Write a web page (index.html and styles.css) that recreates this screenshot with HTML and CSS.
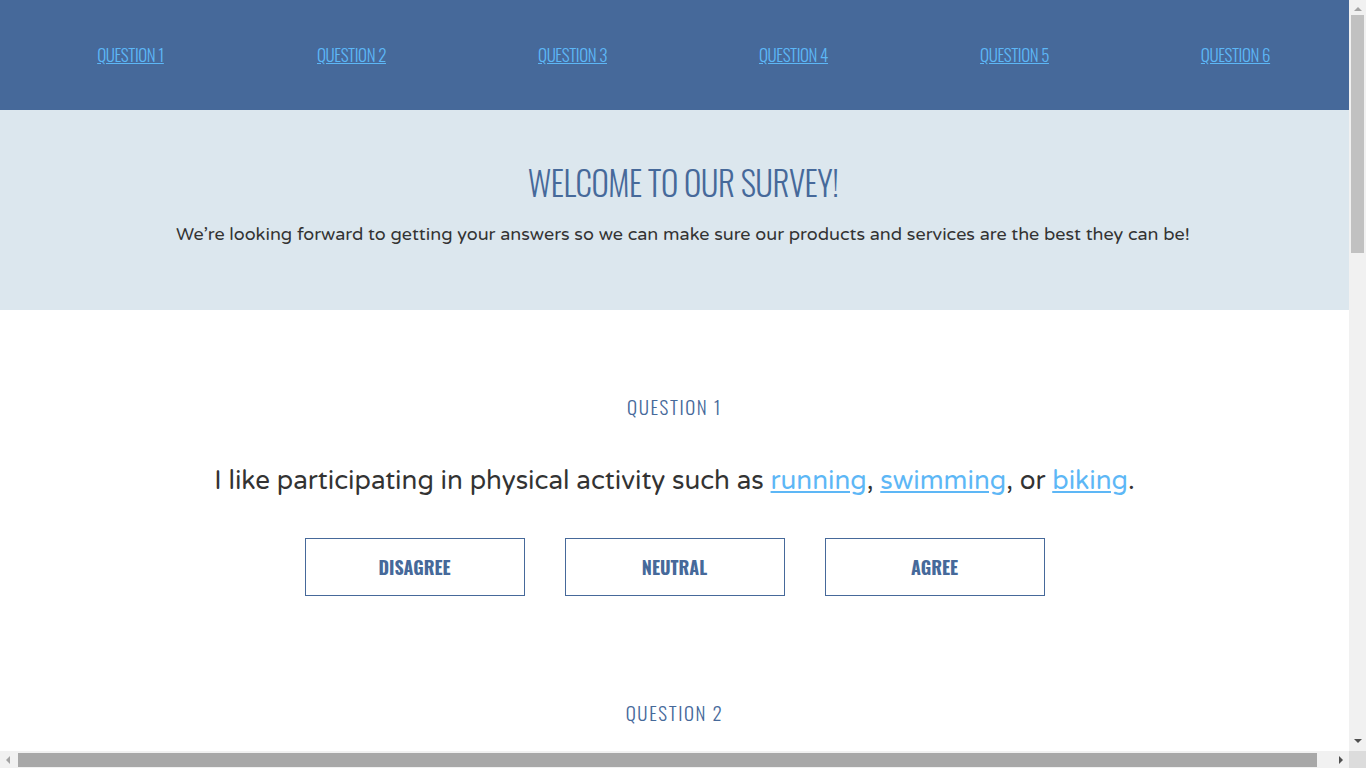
FILE: index.html
```html
<!DOCTYPE html>
<html lang="en">
<head>
<meta charset="utf-8">
<title>Survey</title>
<link rel="stylesheet" href="styles.css">
</head>
<body>
<nav class="nav">
  <ul class="nav-list">
    <li><a href="#q1">Question 1</a></li>
    <li><a href="#q2">Question 2</a></li>
    <li><a href="#q3">Question 3</a></li>
    <li><a href="#q4">Question 4</a></li>
    <li><a href="#q5">Question 5</a></li>
    <li><a href="#q6">Question 6</a></li>
  </ul>
</nav>
<header class="hero">
  <h1 class="hero-title">Welcome to our survey!</h1>
  <p class="hero-text">We’re looking forward to getting your answers so we can make sure our products and services are the best they can be!</p>
</header>
<main class="questions">
  <section class="question" id="q1">
    <h2 class="question-label">Question 1</h2>
    <p class="question-text">I like participating in physical activity such as <a href="#">running</a>, <a href="#">swimming</a>, or <a href="#">biking</a>.</p>
    <div class="answers">
      <button class="answer">Disagree</button>
      <button class="answer">Neutral</button>
      <button class="answer">Agree</button>
    </div>
  </section>
  <section class="question" id="q2">
    <h2 class="question-label">Question 2</h2>
    <p class="question-text">I try to eat a balanced diet with plenty of <a href="#">fruits</a> and <a href="#">vegetables</a>.</p>
    <div class="answers">
      <button class="answer">Disagree</button>
      <button class="answer">Neutral</button>
      <button class="answer">Agree</button>
    </div>
  </section>
  <section class="question" id="q3">
    <h2 class="question-label">Question 3</h2>
    <p class="question-text">I get at least eight hours of <a href="#">sleep</a> most nights.</p>
    <div class="answers">
      <button class="answer">Disagree</button>
      <button class="answer">Neutral</button>
      <button class="answer">Agree</button>
    </div>
  </section>
  <section class="question" id="q4">
    <h2 class="question-label">Question 4</h2>
    <p class="question-text">I enjoy spending time <a href="#">outdoors</a>.</p>
    <div class="answers">
      <button class="answer">Disagree</button>
      <button class="answer">Neutral</button>
      <button class="answer">Agree</button>
    </div>
  </section>
  <section class="question" id="q5">
    <h2 class="question-label">Question 5</h2>
    <p class="question-text">I would recommend our <a href="#">products</a> to a friend.</p>
    <div class="answers">
      <button class="answer">Disagree</button>
      <button class="answer">Neutral</button>
      <button class="answer">Agree</button>
    </div>
  </section>
</main>
<div class="scrollbar-v" aria-hidden="true">
  <span class="arrow arrow-up"></span>
  <span class="thumb-v"></span>
  <span class="arrow arrow-down"></span>
</div>
<div class="scrollbar-h" aria-hidden="true">
  <span class="arrow arrow-left"></span>
  <span class="thumb-h"></span>
  <span class="arrow arrow-right"></span>
  <span class="corner"></span>
</div>
</body>
</html>
```
FILE: styles.css
```css
html, body {
  margin: 0;
  padding: 0;
}
body {
  font-family: "Varela Round", "Open Sans", "Noto Sans", sans-serif;
  color: #333333;
  background: #ffffff;
}
.nav {
  width: 100vw;
  box-sizing: border-box;
  background: #46699a;
  padding: 0 20px;
  height: 110px;
}
.nav-list {
  list-style: none;
  margin: 0;
  padding: 0;
  height: 100%;
  display: grid;
  grid-template-columns: repeat(6, 1fr);
  align-items: center;
}
.nav-list li {
  text-align: center;
  padding-bottom: 2px;
}
.nav-list a {
  font-family: "Oswald", "DejaVu Sans", sans-serif;
  font-weight: 300;
  font-size: 17px;
  text-transform: uppercase;
  color: #5db7f6;
  letter-spacing: -0.4px;
}
.hero {
  width: 100vw;
  box-sizing: border-box;
  background: #dce7ee;
  text-align: center;
  padding: 51px 20px 62px;
}
.hero-title {
  margin: 0;
  font-family: "Oswald", "DejaVu Sans", sans-serif;
  font-weight: 300;
  font-size: 33px;
  line-height: 43px;
  text-transform: uppercase;
  color: #46699a;
  letter-spacing: -0.5px;
}
.hero-text {
  margin: 17px 0 0;
  font-size: 18px;
  line-height: 27px;
}
.questions {
  width: calc(100vw - 17px);
  padding-bottom: 100px;
}
.question {
  text-align: center;
  padding: 84px 20px 20px;
}
.question-label {
  margin: 0;
  font-family: "Oswald", "DejaVu Sans", sans-serif;
  font-weight: 300;
  font-size: 19px;
  line-height: 24px;
  letter-spacing: 1.6px;
  text-transform: uppercase;
  color: #46699a;
}
.question-text {
  margin: 45px 0 0;
  font-size: 26px;
  line-height: 36px;
}
.question-text a {
  color: #5db7f6;
}
.answers {
  margin-top: 39px;
  display: flex;
  justify-content: center;
  gap: 40px;
}
.answer {
  width: 220px;
  height: 58px;
  background: #ffffff;
  border: 1px solid #46699a;
  font-family: "Oswald", "DejaVu Sans", sans-serif;
  font-weight: 700;
  font-size: 18px;
  text-transform: uppercase;
  color: #46699a;
  cursor: pointer;
}

/* browser scrollbars seen in the screenshot */
.scrollbar-v {
  position: fixed;
  top: 0;
  right: 0;
  width: 17px;
  height: calc(100vh - 17px);
  background: #f1f1f1;
  display: flex;
  flex-direction: column;
  align-items: center;
}
.thumb-v {
  flex: 0 0 238px;
  width: 13px;
  background: #c1c1c1;
}
.arrow-up {
  margin: 7px 0 4px;
}
.arrow-down {
  margin-top: auto;
  margin-bottom: 8px;
}
.scrollbar-h {
  position: fixed;
  left: 0;
  bottom: 0;
  width: 100vw;
  height: 17px;
  background: #f1f1f1;
  display: flex;
  align-items: center;
}
.thumb-h {
  flex: 0 0 1299px;
  height: 14px;
  background: #a8a8a8;
}
.arrow-left {
  margin: 0 8px 0 6px;
}
.arrow-right {
  margin: 0 6px 0 auto;
}
.corner {
  flex: 0 0 17px;
  height: 17px;
  background: #dcdcdc;
}
.arrow {
  width: 0;
  height: 0;
  border-style: solid;
  flex: none;
}
.arrow-up {
  border-width: 0 4px 4px;
  border-color: transparent transparent #a3a3a3;
}
.arrow-down {
  border-width: 4px 4px 0;
  border-color: #505050 transparent transparent;
}
.arrow-left {
  border-width: 4px 4px 4px 0;
  border-color: transparent #a3a3a3 transparent transparent;
}
.arrow-right {
  border-width: 4px 0 4px 4px;
  border-color: transparent transparent transparent #505050;
}
```
